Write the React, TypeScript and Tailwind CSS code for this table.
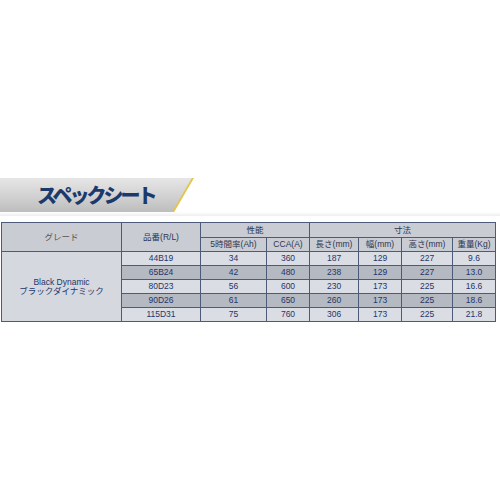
const rows = [
  { code: '44B19', ah: '34', cca: '360', len: '187', wid: '129', hgt: '227', kg: '9.6' },
  { code: '65B24', ah: '42', cca: '480', len: '238', wid: '129', hgt: '227', kg: '13.0' },
  { code: '80D23', ah: '56', cca: '600', len: '230', wid: '173', hgt: '225', kg: '16.6' },
  { code: '90D26', ah: '61', cca: '650', len: '260', wid: '173', hgt: '225', kg: '18.6' },
  { code: '115D31', ah: '75', cca: '760', len: '306', wid: '173', hgt: '225', kg: '21.8' },
]

const font = "font-['Liberation_Sans','Noto_Sans_CJK_JP',sans-serif]"
const th = 'border border-[#4d5b78] bg-[#c9ccd3] text-[8.5px] font-normal text-[#2d3550] p-0 leading-none'
const td = 'border border-[#4d5b78] text-[8.5px] text-[#24366a] p-0 leading-none text-center h-[14px]'

export default function App() {
  return (
    <div className={`w-[500px] h-[500px] bg-white ${font}`}>
      <div className="h-[178px]" />
      <div className="relative h-[34px]">
        <div className="h-full w-[193px] bg-gradient-to-b from-[#e6e6e6] via-[#d3d3d3] to-[#bdbdbd] [clip-path:polygon(0_0,100%_0,90%_100%,0_100%)]" />
        <div className="absolute left-[172px] top-0 h-full w-[22px] bg-[#e2c650] [clip-path:polygon(90%_0,100%_0,10%_100%,0_100%)]" />
        <div className="absolute inset-0 flex items-center pl-[37px]">
          <span className="text-[20px] font-black tracking-[-3px] text-[#1b3a6b] font-['Noto_Sans_CJK_JP',sans-serif]">
            スペックシート
          </span>
        </div>
      </div>
      <div className="h-[4px] bg-gradient-to-b from-white to-[#eceef1]" />
      <div className="h-[6px]" />
      <table className="ml-[1px] w-[494px] table-fixed border-collapse border border-[#4d5b78]">
        <colgroup>
          <col className="w-[120px]" />
          <col className="w-[79px]" />
          <col className="w-[66px]" />
          <col className="w-[43px]" />
          <col className="w-[49px]" />
          <col className="w-[43px]" />
          <col className="w-[51px]" />
          <col className="w-[43px]" />
        </colgroup>
        <thead>
          <tr className="h-[15px]">
            <th rowSpan={2} className={`${th} text-[#555]`}>グレード</th>
            <th rowSpan={2} className={th}>品番(R/L)</th>
            <th colSpan={2} className={th}>性能</th>
            <th colSpan={4} className={th}>寸法</th>
          </tr>
          <tr className="h-[14px]">
            <th className={th}>5時間率(Ah)</th>
            <th className={th}>CCA(A)</th>
            <th className={th}>長さ(mm)</th>
            <th className={th}>幅(mm)</th>
            <th className={th}>高さ(mm)</th>
            <th className={th}>重量(Kg)</th>
          </tr>
        </thead>
        <tbody>
          {rows.map((r, i) => {
            const bg = i % 2 === 1 ? 'bg-[#b5b9c1]' : 'bg-[#dadde3]'
            return (
              <tr key={r.code}>
                {i === 0 && (
                  <td rowSpan={5} className={`${td} bg-[#d5d8de] text-[8.5px] leading-[10px]`}>
                    Black Dynamic
                    <br />
                    ブラックダイナミック
                  </td>
                )}
                <td className={`${td} ${bg}`}>{r.code}</td>
                <td className={`${td} ${bg}`}>{r.ah}</td>
                <td className={`${td} ${bg}`}>{r.cca}</td>
                <td className={`${td} ${bg}`}>{r.len}</td>
                <td className={`${td} ${bg}`}>{r.wid}</td>
                <td className={`${td} ${bg}`}>{r.hgt}</td>
                <td className={`${td} ${bg}`}>{r.kg}</td>
              </tr>
            )
          })}
        </tbody>
      </table>
    </div>
  )
}
